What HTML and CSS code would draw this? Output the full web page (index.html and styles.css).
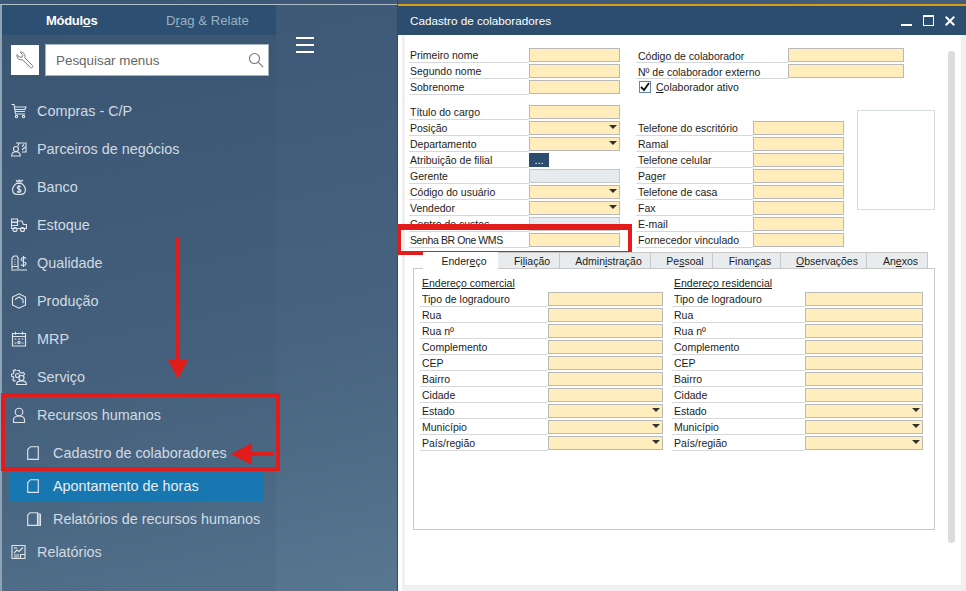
FILE: index.html
```html
<!DOCTYPE html>
<html lang="pt-BR">
<head>
<meta charset="utf-8">
<title>Cadastro de colaboradores</title>
<link rel="stylesheet" href="styles.css">
</head>
<body>
<div class="app">
  <div class="shell">
    <div class="strip"></div>
    <div class="shell-main">
      <aside class="sidebar">
        <div class="mod-tabs">
          <span class="mod-tab active">Módul<u>o</u>s</span>
          <span class="mod-tab">D<u>r</u>ag &amp; Relate</span>
        </div>
        <div class="search-row">
          <button class="wrench">
            <svg width="18" height="18" viewBox="0 0 18 18" fill="none" stroke="#777" stroke-width="1"><path d="M4.200 1.100 7 4.400 5.800 6.300 3.300 6 1 3.600C.5 7 3 9.600 6.500 8.800l8 7.800c1.100 1 3-.8 2-2L8.800 6.800C9.800 3.500 7.200.4 4.200 1.100z"/></svg>
          </button>
          <div class="search">
            <span>Pesquisar menus</span>
            <svg width="16" height="16" viewBox="0 0 16 16" fill="none" stroke="#777" stroke-width="1.100"><circle cx="6.500" cy="6.500" r="5"/><path d="m10.200 10.200 5 5"/></svg>
          </div>
        </div>
        <nav class="menu">
          <a class="menu-item"><svg class="ico" viewBox="0 0 16 16"><path d="M.5 1.500h2.500l1.500 9.500h9.500M3.500 4h11.500l-1 2.500H4M4 8.500h10"/><circle cx="5.500" cy="13.500" r="1.200"/><circle cx="12.500" cy="13.500" r="1.200"/></svg>Compras - C/P</a>
          <a class="menu-item"><svg class="ico" viewBox="0 0 16 16"><circle cx="5" cy="8" r="2.500"/><path d="M.7 15c0-3 2-4.300 4.300-4.300S9.300 12 9.300 15zM5 2h10v9h-4M8 2l-1 3M11 5.500l2-2M11 9l3-3"/></svg>Parceiros de negócios</a>
          <a class="menu-item"><svg class="ico" viewBox="0 0 16 16"><path d="M5.500 4.500h5C14 7 15 10 14 13c-.4 1.500-2 2.500-6 2.500S2.400 14.500 2 13c-1-3 0-6 3.500-8.500zM5 1.200l2 1.300 1.500-1.500 1.500 1.500L12 1M5.500 3h5"/><path d="M10 7.500C9 6.700 6.300 6.800 6.300 8.500S10 10 10 11.800s-2.800 1.700-4 .7M8 6v8"/></svg>Banco</a>
          <a class="menu-item"><svg class="ico" viewBox="0 0 16 16"><path d="M.5 2h6v3H.5zM.5 5.500h6v3H.5zM7 4h4l1.500 3.500h3v4H.5v-3"/><circle cx="4" cy="12.500" r="2"/><circle cx="11.500" cy="12.500" r="2"/></svg>Estoque</a>
          <a class="menu-item"><svg class="ico" viewBox="0 0 16 16"><path d="M1 14V3l2-2h3l1 2v11M3.500 4.500h1M3.500 7h1M3.500 9.500h1M1 11.500h6M0 15h16"/><path d="M15 3.500C14 2.300 10 2.300 10 4.500s5 1.500 5 4-3.800 2.500-5.200 1.200M12.500 1v11"/></svg>Qualidade</a>
          <a class="menu-item"><svg class="ico" viewBox="0 0 16 16"><path d="M8 .8 14.500 4v8L8 15.200 1.500 12V4zM4 6.500 8 4l4 2.500v3.800"/></svg>Produção</a>
          <a class="menu-item"><svg class="ico" viewBox="0 0 16 16"><path d="M1.500 2.500h13v12.500h-13zM1.500 5.500h13M4.500 .8v3M11.500 .8v3M3.500 8h2M7 8h2M10.500 8h2M3.500 12h2M10.500 12h2"/><circle cx="8" cy="11.500" r="1.200"/></svg>MRP</a>
          <a class="menu-item"><svg class="ico" viewBox="0 0 16 16"><path d="M6 1.500h2.500l.5 1.800 1.700.8 1.600-.7 1.300 1.600-1 1.500.2 1.500M4.600 11.500 3.200 12.300 1.800 10.800l.8-1.500-.3-1.500L.5 7.200V5.200l1.800-.5.7-1.600-.8-1.300L4 .8l1.300 1"/><circle cx="6.500" cy="6.500" r="2"/><circle cx="10.500" cy="9" r="2.500"/><path d="M5.500 15.500c0-2.500 2-3.700 5-3.700s5 1.200 5 3.700z"/></svg>Serviço</a>
          <a class="menu-item"><svg class="ico" viewBox="0 0 16 16"><circle cx="8" cy="5" r="3.800"/><path d="M2.500 15.500v-2.500c0-2.500 2-4 5.500-4s5.500 1.500 5.500 4v2.500z"/></svg>Recursos humanos</a>
          <div class="submenu">
            <a class="sub-item"><svg class="ico doc" viewBox="0 0 12 14"><path d="M3.500.7h7.800v12.600H.7V3.500z"/></svg>Cadastro de colaboradores</a>
            <a class="sub-item selected"><svg class="ico doc" viewBox="0 0 12 14"><path d="M3.500.7h7.800v12.600H.7V3.500z"/></svg>Apontamento de horas</a>
            <a class="sub-item"><svg class="ico docs" viewBox="0 0 14 14"><path d="M3 .7h7.500v12.600H.7V3zM10.500 1.500l3 .7v11.300l-3 .5M12 1.900v11.800"/></svg>Relatórios de recursos humanos</a>
          </div>
          <a class="menu-item compact"><svg class="ico" viewBox="0 0 16 16"><path d="M1 1.500h13v13H1zM3 9l3-3 2 1.500 4-4M3 11h5M3 13h5M9.500 14.500v-4h4.500"/><path d="M3 4h3"/></svg>Relatórios</a>
        </nav>
      </aside>
      <div class="hamburger-col">
        <div class="hamburger"><i></i><i></i><i></i></div>
      </div>
    </div>
  </div>

  <section class="window">
    <header class="titlebar">
      <span class="wintitle">Cadastro de colaboradores</span>
      <div class="controls">
        <span class="min"></span>
        <span class="max"></span>
        <svg width="10" height="10" viewBox="0 0 10 10" stroke="#fff" stroke-width="2"><path d="m.7.700 8.600 8.600M9.300.700.700 9.300"/></svg>
      </div>
    </header>
    <div class="winbody">
      <div class="frame">
        <div class="form">
          <div class="top">
            <div class="col-a">
              <div class="row"><label>Primeiro nome</label><span class="inp"></span></div>
              <div class="row"><label>Segundo nome</label><span class="inp"></span></div>
              <div class="row"><label>Sobrenome</label><span class="inp"></span></div>
              <div class="spacer"></div>
              <div class="row"><label>Título do cargo</label><span class="inp"></span></div>
              <div class="row"><label>Posição</label><span class="inp drop"></span></div>
              <div class="row"><label>Departamento</label><span class="inp drop"></span></div>
              <div class="row"><label>Atribuição de filial</label><button class="dots">...</button></div>
              <div class="row"><label>Gerente</label><span class="inp off"></span></div>
              <div class="row"><label>Código do usuário</label><span class="inp drop"></span></div>
              <div class="row"><label>Vendedor</label><span class="inp drop"></span></div>
              <div class="row"><label>Centro de custos</label><span class="inp off"></span></div>
              <div class="row"><label class="tight">Senha BR One WMS</label><span class="inp"></span></div>
            </div>
            <div class="col-b">
              <div class="row wide"><label>Código de colaborador</label><span class="inp"></span></div>
              <div class="row wide"><label>Nº de colaborador externo</label><span class="inp"></span></div>
              <div class="check-row">
                <span class="check"><svg width="10" height="10" viewBox="0 0 10 10" fill="none" stroke="#111" stroke-width="1.800"><path d="m1 5 3 3 5-7"/></svg></span>
                <span><u>C</u>olaborador ativo</span>
              </div>
              <div class="contact">
                <div class="contact-fields">
                  <div class="row mid"><label>Telefone do escritório</label><span class="inp"></span></div>
                  <div class="row mid"><label>Ramal</label><span class="inp"></span></div>
                  <div class="row mid"><label>Telefone celular</label><span class="inp"></span></div>
                  <div class="row mid"><label>Pager</label><span class="inp"></span></div>
                  <div class="row mid"><label>Telefone de casa</label><span class="inp"></span></div>
                  <div class="row mid"><label>Fax</label><span class="inp"></span></div>
                  <div class="row mid"><label>E-mail</label><span class="inp"></span></div>
                  <div class="row mid"><label>Fornecedor vinculado</label><span class="inp"></span></div>
                </div>
                <div class="photo"></div>
              </div>
            </div>
          </div>
          <div class="tabs">
            <span class="tab active t1">Ender<u>e</u>ço</span>
            <span class="tab t2">Fi<u>l</u>iação</span>
            <span class="tab t3">Admin<u>i</u>stração</span>
            <span class="tab t4">Pe<u>s</u>soal</span>
            <span class="tab t5">Finan<u>ç</u>as</span>
            <span class="tab t6"><u>O</u>bservações</span>
            <span class="tab t7">An<u>e</u>xos</span>
          </div>
          <div class="panel">
            <div class="addr">
              <h4>Endereço comercial</h4>
              <div class="row"><label>Tipo de logradouro</label><span class="inp"></span></div>
              <div class="row"><label>Rua</label><span class="inp"></span></div>
              <div class="row"><label>Rua nº</label><span class="inp"></span></div>
              <div class="row"><label>Complemento</label><span class="inp"></span></div>
              <div class="row"><label>CEP</label><span class="inp"></span></div>
              <div class="row"><label>Bairro</label><span class="inp"></span></div>
              <div class="row"><label>Cidade</label><span class="inp"></span></div>
              <div class="row"><label>Estado</label><span class="inp drop"></span></div>
              <div class="row"><label>Município</label><span class="inp drop"></span></div>
              <div class="row"><label>País/região</label><span class="inp drop"></span></div>
            </div>
            <div class="addr second">
              <h4>Endereço residencial</h4>
              <div class="row"><label>Tipo de logradouro</label><span class="inp"></span></div>
              <div class="row"><label>Rua</label><span class="inp"></span></div>
              <div class="row"><label>Rua nº</label><span class="inp"></span></div>
              <div class="row"><label>Complemento</label><span class="inp"></span></div>
              <div class="row"><label>CEP</label><span class="inp"></span></div>
              <div class="row"><label>Bairro</label><span class="inp"></span></div>
              <div class="row"><label>Cidade</label><span class="inp"></span></div>
              <div class="row"><label>Estado</label><span class="inp drop"></span></div>
              <div class="row"><label>Município</label><span class="inp drop"></span></div>
              <div class="row"><label>País/região</label><span class="inp drop"></span></div>
            </div>
          </div>
        </div>
        <div class="scrollbar"></div>
      </div>
    </div>
  </section>

  <div class="mark box-menu"></div>
  <div class="mark box-field"></div>
  <svg class="arrow arrow-down" width="20" height="141" viewBox="0 0 20 141"><path fill="#e21b1b" d="M8 0h4v122h8l-10 19L0 122h8z"/></svg>
  <svg class="arrow arrow-left" width="42" height="22" viewBox="0 0 42 22"><path fill="#e21b1b" d="M0 11 21 0v9h21v4H21v9z"/></svg>
</div>
</body>
</html>
```

FILE: styles.css
```css
* { box-sizing: border-box; }
html, body { margin: 0; padding: 0; }
body { width: 966px; height: 591px; overflow: hidden; background: #4f6d87; }
.app {
  position: relative;
  display: flex;
  width: 966px;
  height: 591px;
  overflow: hidden;
  background: linear-gradient(168deg, #3b5775 0%, #47637f 50%, #5f7f98 100%);
}
.shell { width: 397px; display: flex; flex-direction: column; }
.strip { height: 5px; border-bottom: 1px solid #aebfca; }
.shell-main { flex: 1; display: flex; border-left: 2px solid #8ea3b6; }
.sidebar {
  width: 274px;
  background: rgba(40, 62, 88, .08);
  font-family: "Liberation Sans", Arial, sans-serif;
}
.mod-tabs { height: 30px; background: #2c4f72; display: flex; align-items: center; font-size: 13.200px; }
.mod-tab { color: #9db0c1; white-space: nowrap; }
.mod-tab.active { color: #fff; font-weight: bold; font-size: 13px; letter-spacing: -.3px; width: 120px; margin-left: 44px; }
.search-row { display: flex; gap: 6px; padding: 9px 7px 0 9px; align-items: center; }
.wrench { width: 28px; height: 30px; background: #fff; border: 0; padding: 0; display: flex; align-items: center; justify-content: center; }
.search {
  flex: 1;
  height: 32px;
  background: #fff;
  border: 1px solid #a9b3bb;
  padding: 0 4px 0 10px;
  display: flex;
  align-items: center;
  justify-content: space-between;
  font-size: 13.400px;
  color: #666;
}
.menu { padding-top: 16px; }
.menu-item, .sub-item {
  display: flex;
  align-items: center;
  font-size: 14.400px;
  color: #d2dbe3;
  white-space: nowrap;
}
.menu-item { height: 38px; padding-left: 9px; gap: 10px; }
.menu-item.compact { height: 35px; }
.ico { width: 16px; height: 16px; flex: none; fill: none; stroke: #dde4ea; stroke-width: 1.150; }
.submenu { padding-top: 4px; display: flex; flex-direction: column; gap: 3px; }
.sub-item { height: 30px; margin: 0 12px 0 8px; padding-left: 17px; }
.sub-item .doc { width: 12px; height: 14px; margin-right: 14px; }
.sub-item .docs { width: 14px; height: 14px; margin-right: 12px; }
.sub-item.selected { background: #1877b0; color: #e6edf2; }
.hamburger-col { flex: 1; padding: 32px 0 0 20px; }
.hamburger { width: 18px; display: flex; flex-direction: column; gap: 5px; }
.hamburger i { display: block; height: 2px; background: #fff; }

.window { width: 569px; display: flex; flex-direction: column; padding-top: 4px; border-left: 1px solid #2c4d6e; }
.titlebar {
  height: 31px;
  background: #2c4d6e;
  border-top: 2px solid #dd9a12;
  display: flex;
  align-items: center;
  justify-content: space-between;
  padding: 0 11px 0 12px;
  color: #fff;
}
.wintitle { font: 11.700px "Liberation Sans", Tahoma, sans-serif; }
.controls { display: flex; align-items: flex-end; gap: 11px; }
.min { width: 11px; height: 2px; background: #fff; }
.max { width: 11px; height: 11px; border: 1px solid #fff; border-top-width: 2px; }
.winbody { flex: 1; background: #fff; padding-left: 4px; display: flex; }
.frame {
  flex: 1;
  display: flex;
  border-left: 3px solid #f0f0f0;
  border-right: 5px solid #f0f0f0;
  border-bottom: 6px solid #f0f0f0;
  padding-right: 6px;
}
.form { width: 543px; padding: 13px 0 0 4px; font: 10.500px "Liberation Sans", Tahoma, sans-serif; color: #1c1c1c; }
.scrollbar { width: 7px; height: 492px; margin-top: 16px; background: #dcdcdc; border-radius: 3px; }
.top { display: flex; gap: 16px; }
.col-a { width: 211px; }
.col-b { flex: 1; }
.spacer { height: 9px; }
.row { display: flex; height: 16px; }
.row label { height: 15px; width: 120px; padding-left: 1px; line-height: 15px; border-bottom: 1px solid #d5d9dc; white-space: nowrap; flex: none; }
.row label.tight { letter-spacing: -.4px; }
.row .inp { width: 91px; }
.inp {
  display: block;
  position: relative;
  height: 14px;
  background: #ffedbd;
  border: 1px solid #b9b9b6;
}
.inp.off { background: #e6ebef; border-color: #c3c7ca; }
.inp.drop::after {
  content: "";
  position: absolute;
  right: 2px;
  top: 3px;
  border-style: solid;
  border-width: 4px 4px 0;
  border-color: #333 transparent transparent;
}
.dots { width: 20px; height: 14px; padding: 0; border: 0; background: #2c4d6e; color: #fff; font: 11px "Liberation Sans", sans-serif; line-height: 10px; }
.col-b .row label { padding-left: 2px; }
.row.wide label { width: 152px; line-height: 16px; }
.row.wide .inp { width: 116px; }
.row.mid label { width: 117px; }
.check-row { display: flex; align-items: center; height: 14px; padding-left: 3px; gap: 5px; }
.check { width: 12px; height: 12px; border: 1px solid #5f86ad; display: flex; align-items: center; justify-content: center; background: #fff; }
.contact { display: flex; gap: 13px; margin-top: 16px; }
.contact-fields { padding-top: 11px; }
.photo { width: 78px; height: 100px; border: 1px solid #d5dde2; }
.tabs { display: flex; height: 16px; margin: 3px 0 0 14px; position: relative; z-index: 1; }
.tab {
  display: flex;
  align-items: center;
  justify-content: center;
  padding-left: 7px;
  background: #e8ecef;
  border: 1px solid #c8c8c8;
  border-left: 0;
  border-bottom: 0;
  white-space: nowrap;
}
.tab.active { background: #fff; border: 0; height: 17px; }
.t1 { width: 75px; } .t2 { width: 62px; } .t3 { width: 91px; } .t4 { width: 62px; }
.t5 { width: 68px; } .t6 { width: 86px; } .t7 { width: 61px; }
.panel {
  width: 522px;
  height: 262px;
  border: 1px solid #c8c8c8;
  padding: 8px 0 0 6px;
  margin-left: 4px;
  display: flex;
  gap: 9px;
}
.addr { width: 243px; }
.addr.second { width: 251px; }
.addr h4 { margin: 0; height: 15px; padding-left: 2px; font-weight: normal; font-size: inherit; text-decoration: underline; line-height: 13px; }
.addr .row label { width: 128px; padding-left: 2px; }
.addr .row .inp { width: 115px; }
.addr.second .row label { width: 133px; }
.addr.second .row .inp { width: 118px; }

.mark { position: absolute; border: 4px solid #e21b1b; }
.box-menu { left: 1px; top: 393px; width: 279px; height: 78px; }
.box-field { left: 397px; top: 224px; width: 235px; height: 31px; border-top-width: 6px; }
.arrow { position: absolute; }
.arrow-down { left: 168px; top: 238px; }
.arrow-left { left: 231px; top: 443px; }
```
